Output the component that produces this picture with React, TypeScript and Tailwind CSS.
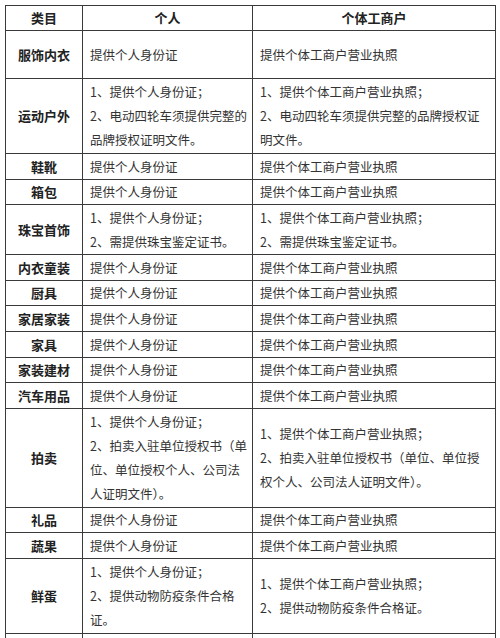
import React from 'react'

type Row = {
  name: string
  h: number
  personal: string[]
  biz: string[]
}

const ID = '提供个人身份证'
const LIC = '提供个体工商户营业执照'

const rows: Row[] = [
  { name: '服饰内衣', h: 48, personal: [ID], biz: [LIC] },
  {
    name: '运动户外', h: 75,
    personal: ['1、提供个人身份证；', '2、电动四轮车须提供完整的', '品牌授权证明文件。'],
    biz: ['1、提供个体工商户营业执照；', '2、电动四轮车须提供完整的品牌授权证', '明文件。'],
  },
  { name: '鞋靴', h: 26, personal: [ID], biz: [LIC] },
  { name: '箱包', h: 25, personal: [ID], biz: [LIC] },
  {
    name: '珠宝首饰', h: 50,
    personal: ['1、提供个人身份证；', '2、需提供珠宝鉴定证书。'],
    biz: ['1、提供个体工商户营业执照；', '2、需提供珠宝鉴定证书。'],
  },
  { name: '内衣童装', h: 26, personal: [ID], biz: [LIC] },
  { name: '厨具', h: 25, personal: [ID], biz: [LIC] },
  { name: '家居家装', h: 26, personal: [ID], biz: [LIC] },
  { name: '家具', h: 26, personal: [ID], biz: [LIC] },
  { name: '家装建材', h: 25, personal: [ID], biz: [LIC] },
  { name: '汽车用品', h: 26, personal: [ID], biz: [LIC] },
  {
    name: '拍卖', h: 99,
    personal: ['1、提供个人身份证；', '2、拍卖入驻单位授权书（单', '位、单位授权个人、公司法', '人证明文件）。'],
    biz: ['1、提供个体工商户营业执照；', '2、拍卖入驻单位授权书（单位、单位授', '权个人、公司法人证明文件）。'],
  },
  { name: '礼品', h: 25, personal: [ID], biz: [LIC] },
  { name: '蔬果', h: 26, personal: [ID], biz: [LIC] },
  {
    name: '鲜蛋', h: 75,
    personal: ['1、提供个人身份证；', '2、提供动物防疫条件合格', '证。'],
    biz: ['1、提供个体工商户营业执照；', '2、提供动物防疫条件合格证。'],
  },
]

function Lines({ lines }: { lines: string[] }) {
  if (lines.length === 1) return <span className="leading-[20px]">{lines[0]}</span>
  return (
    <div className="leading-[24px]">
      {lines.map((l, i) => <div key={i}>{l}</div>)}
    </div>
  )
}

export default function App() {
  return (
    <div
      className="w-[500px] h-[638px] overflow-hidden bg-white pt-[5px] pl-[5px] text-[#333] text-[12.5px]"
      style={{ fontFamily: '"Noto Sans CJK SC", "Noto Sans", sans-serif' }}
    >
      <table className="border-collapse table-fixed w-[490px]">
        <colgroup>
          <col className="w-[77px]" />
          <col className="w-[170px]" />
          <col className="w-[243px]" />
        </colgroup>
        <thead>
          <tr className="h-[25px]">
            <th className="border border-[#3a3a3a] p-0 font-bold text-[13px] text-[#222]">类目</th>
            <th className="border border-[#3a3a3a] p-0 font-bold text-[13px] text-[#222]">个人</th>
            <th className="border border-[#3a3a3a] p-0 font-bold text-[13px] text-[#222]">个体工商户</th>
          </tr>
        </thead>
        <tbody>
          {rows.map(r => (
            <tr key={r.name} style={{ height: r.h }}>
              <td className="border border-[#3a3a3a] p-0 text-center align-middle font-bold text-[13px] text-[#222]">
                {r.name}
              </td>
              <td className="border border-[#3a3a3a] py-0 pl-[7px] pr-0 align-middle whitespace-nowrap">
                <Lines lines={r.personal} />
              </td>
              <td className="border border-[#3a3a3a] py-0 pl-[7px] pr-0 align-middle whitespace-nowrap">
                <Lines lines={r.biz} />
              </td>
            </tr>
          ))}
          {/* 下に続く行（画面外） */}
          <tr className="h-[60px]">
            <td className="border border-[#3a3a3a] p-0" />
            <td className="border border-[#3a3a3a] p-0" />
            <td className="border border-[#3a3a3a] p-0" />
          </tr>
        </tbody>
      </table>
    </div>
  )
}
